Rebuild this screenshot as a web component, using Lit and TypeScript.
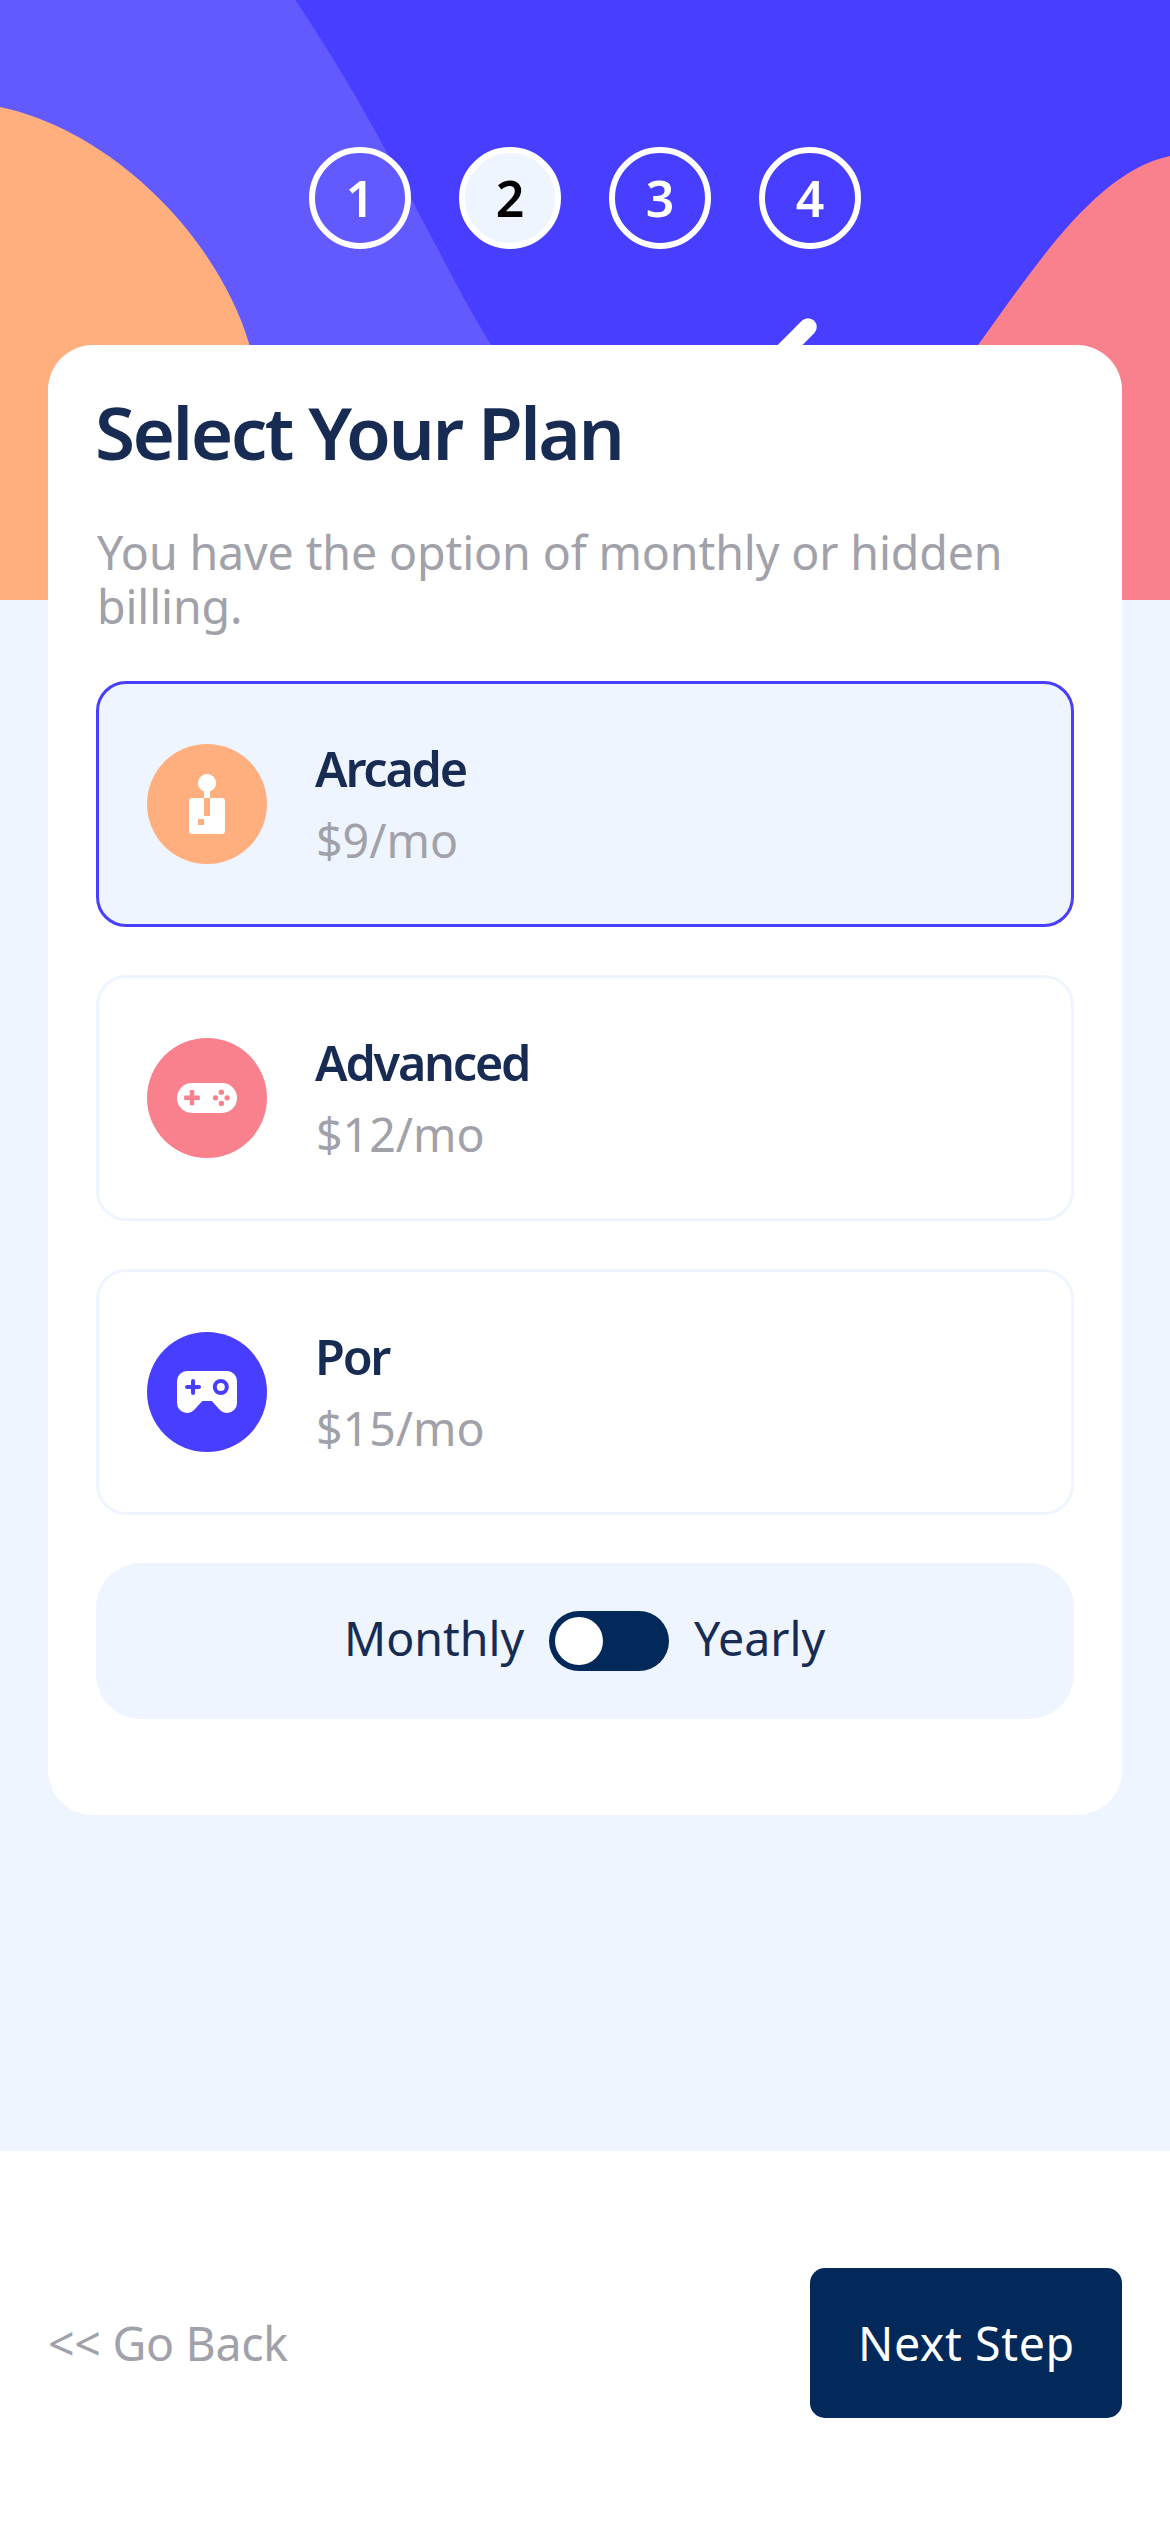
import { LitElement, html, css, svg, TemplateResult } from "lit";
import { customElement, property, state } from "lit/decorators.js";
import { classMap } from "lit/directives/class-map.js";

interface Plan {
  id: string;
  name: string;
  price: string;
}

const PLANS: Plan[] = [
  { id: "arcade", name: "Arcade", price: "$9/mo" },
  { id: "advanced", name: "Advanced", price: "$12/mo" },
  { id: "pro", name: "Por", price: "$15/mo" },
];

const ICONS: Record<string, TemplateResult> = {
  arcade: svg`
    <circle cx="20" cy="20" r="20" fill="#ffaf7e" />
    <path fill="#fff" d="M25 18h-4v6h-2v-6h-4a1 1 0 0 0-1 1v10a1 1 0 0 0 1 1h10a1 1 0 0 0 1-1V19a1 1 0 0 0-1-1Zm-6 9h-2v-2h2v2Zm2-11.17a3 3 0 1 0-2 0V18h2v-2.17Z" />`,
  advanced: svg`
    <circle cx="20" cy="20" r="20" fill="#f9818e" />
    <rect x="10" y="15" width="20" height="10" rx="4.95" ry="5" fill="#fff" />
    <g fill="#f9818e">
      <rect x="12.4" y="19.2" width="5.2" height="1.5" rx="0.2" />
      <rect x="14.25" y="17.35" width="1.5" height="5.1" rx="0.2" />
      <circle cx="24.8" cy="18.1" r="0.9" />
      <circle cx="22.85" cy="19.95" r="0.9" />
      <circle cx="26.7" cy="19.95" r="0.9" />
      <circle cx="24.8" cy="21.8" r="0.9" />
    </g>`,
  pro: svg`
    <circle cx="20" cy="20" r="20" fill="#483eff" />
    <path fill="#fff" d="M13.3 13h13.4a3.3 3.3 0 0 1 3.3 3.3v7.4a3.3 3.3 0 0 1-3.3 3.3c-1.1 0-1.9-.45-2.7-1.35L21.6 23h-3.15L16 25.65c-.8.9-1.6 1.35-2.7 1.35a3.3 3.3 0 0 1-3.3-3.3v-7.4a3.3 3.3 0 0 1 3.3-3.3Z" />
    <path stroke="#483eff" stroke-width="1.33" stroke-linecap="round" d="M13.35 18.33h4M15.35 16.33v4" />
    <circle cx="24.6" cy="18.33" r="2" fill="none" stroke="#483eff" stroke-width="1.33" />`,
};

@customElement("step-list")
export class StepList extends LitElement {
  @property({ type: Number }) current = 1;

  static styles = css`
    :host {
      display: flex;
      justify-content: center;
      gap: 48px;
    }
    .step {
      box-sizing: border-box;
      width: 102px;
      height: 102px;
      border: 6px solid #fff;
      border-radius: 50%;
      display: flex;
      align-items: center;
      justify-content: center;
      color: #fff;
      font-size: 50px;
      font-weight: 650;
      line-height: 60px;
    }
    .step.active {
      background: #eef5ff;
      color: #000;
    }
  `;

  render() {
    return [1, 2, 3, 4].map(
      (n) => html`<div class=${classMap({ step: true, active: n === this.current })}>${n}</div>`
    );
  }
}

@customElement("plan-option")
export class PlanOption extends LitElement {
  @property({ attribute: false }) plan!: Plan;
  @property({ type: Boolean }) selected = false;

  static styles = css`
    :host {
      display: block;
    }
    .plan {
      box-sizing: border-box;
      height: 246px;
      padding: 0 48px;
      border: 3px solid #eef5ff;
      border-radius: 30px;
      display: flex;
      align-items: center;
      gap: 48px;
      background: #fff;
    }
    .plan.selected {
      border-color: #483eff;
      background: #eef5ff;
    }
    .icon {
      width: 120px;
      height: 120px;
      flex: none;
    }
    .info {
      display: flex;
      flex-direction: column;
      gap: 18px;
    }
    .name {
      color: #182c53;
      font-size: 48.5px;
      font-weight: 600;
      line-height: 54px;
      letter-spacing: -2.2px;
    }
    .price {
      color: #a1a1aa;
      font-size: 46.5px;
      line-height: 54px;
      padding-left: 1px;
    }
  `;

  render() {
    return html`
      <div class=${classMap({ plan: true, selected: this.selected })}>
        <svg class="icon" viewBox="0 0 40 40">${ICONS[this.plan.id]}</svg>
        <div class="info">
          <div class="name">${this.plan.name}</div>
          <div class="price">${this.plan.price}</div>
        </div>
      </div>
    `;
  }
}

@customElement("app-root")
export class AppRoot extends LitElement {
  @state() private selected = "arcade";
  @state() private yearly = false;

  static styles = css`
    :host {
      display: block;
      font-family: "Noto Sans", "Open Sans", sans-serif;
    }
    .page {
      position: relative;
      box-sizing: border-box;
      height: 2532px;
      overflow: hidden;
      background: #eef5ff;
      display: flex;
      flex-direction: column;
      justify-content: space-between;
    }
    .backdrop {
      position: absolute;
      top: 0;
      left: 0;
      width: 1170px;
      height: 600px;
    }
    .content {
      position: relative;
      display: flex;
      flex-direction: column;
      gap: 96px;
      padding: 147px 48px 0;
    }
    .card {
      padding: 45px 48px 96px;
      border-radius: 45px;
      background: #fff;
    }
    .title {
      margin: 0 0 51px -1px;
      color: #182c53;
      font-size: 72.8px;
      font-weight: 600;
      line-height: 84px;
      letter-spacing: -2.5px;
    }
    .lead {
      margin: 0 0 48px 1px;
      color: #a1a1aa;
      font-size: 46.5px;
      line-height: 54px;
      letter-spacing: -0.12px;
    }
    .plans {
      display: flex;
      flex-direction: column;
      gap: 48px;
      margin-bottom: 48px;
    }
    .billing {
      box-sizing: border-box;
      height: 156px;
      border-radius: 45px;
      background: #eef5ff;
      display: flex;
      align-items: center;
      justify-content: center;
      gap: 24px;
    }
    .label {
      color: #182c53;
      font-size: 46.5px;
      line-height: 56px;
      padding-bottom: 6px;
      white-space: nowrap;
    }
    .monthly {
      width: 183px;
      text-indent: 2px;
    }
    .yearly {
      width: 135px;
      text-indent: 1px;
    }
    .switch {
      box-sizing: border-box;
      width: 120px;
      height: 60px;
      padding: 6px;
      border-radius: 30px;
      background: #02295a;
      display: flex;
    }
    .switch.on {
      justify-content: flex-end;
    }
    .knob {
      width: 48px;
      height: 48px;
      border-radius: 50%;
      background: #fff;
    }
    .footer {
      position: relative;
      box-sizing: border-box;
      height: 381px;
      padding: 117px 48px 0;
      background: #fff;
      display: flex;
      align-items: flex-start;
      justify-content: space-between;
    }
    .back {
      color: #a1a1aa;
      font-size: 46.5px;
      line-height: 150px;
      letter-spacing: -0.3px;
    }
    .next {
      box-sizing: border-box;
      width: 312px;
      height: 150px;
      padding-left: 48px;
      border-radius: 15px;
      background: #02295a;
      color: #fff;
      font-size: 46.5px;
      line-height: 150px;
      letter-spacing: 0.6px;
      white-space: nowrap;
    }
  `;

  render() {
    return html`
      <div class="page">
        <svg class="backdrop" viewBox="0 0 1170 600">
          <rect width="1170" height="600" fill="#483eff" />
          <path fill="#6259ff" d="M0 0H295.4C351 84 382 142 414 204C437 247 454 281 471 311C478 323 484 333 491 345L560 460V600H0Z" />
          <path fill="#ffaf7e" d="M0 107C110 130 217 235 249.5 345C262 392 262 500 250 600H0Z" />
          <path fill="#f9818e" d="M1170 156C1096 171 1034 268 978 345C940 400 900 500 880 600H1170Z" />
          <path stroke="#fff" stroke-width="17.5" stroke-linecap="round" d="M808 327L760 375" />
        </svg>
        <div class="content">
          <step-list .current=${2}></step-list>
          <div class="card">
            <h1 class="title">Select Your Plan</h1>
            <p class="lead">You have the option of monthly or hidden billing.</p>
            <div class="plans">
              ${PLANS.map(
                (p) => html`<plan-option
                  .plan=${p}
                  ?selected=${p.id === this.selected}
                  @click=${() => (this.selected = p.id)}
                ></plan-option>`
              )}
            </div>
            <div class="billing">
              <span class="label monthly">Monthly</span>
              <div
                class=${classMap({ switch: true, on: this.yearly })}
                @click=${() => (this.yearly = !this.yearly)}
              >
                <div class="knob"></div>
              </div>
              <span class="label yearly">Yearly</span>
            </div>
          </div>
        </div>
        <div class="footer">
          <div class="back">&lt;&lt; Go Back</div>
          <div class="next">Next Step</div>
        </div>
      </div>
    `;
  }
}
